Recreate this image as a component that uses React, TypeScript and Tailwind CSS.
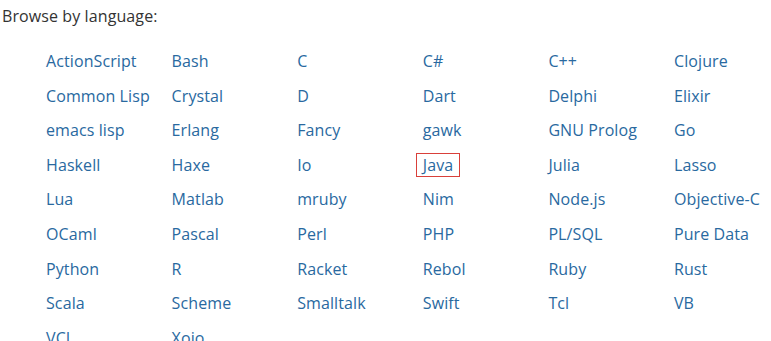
import React from "react";

const rows: string[][] = [
  ["ActionScript", "Bash", "C", "C#", "C++", "Clojure"],
  ["Common Lisp", "Crystal", "D", "Dart", "Delphi", "Elixir"],
  ["emacs lisp", "Erlang", "Fancy", "gawk", "GNU Prolog", "Go"],
  ["Haskell", "Haxe", "Io", "Java", "Julia", "Lasso"],
  ["Lua", "Matlab", "mruby", "Nim", "Node.js", "Objective-C"],
  ["OCaml", "Pascal", "Perl", "PHP", "PL/SQL", "Pure Data"],
  ["Python", "R", "Racket", "Rebol", "Ruby", "Rust"],
  ["Scala", "Scheme", "Smalltalk", "Swift", "Tcl", "VB"],
  ["VCL", "Xojo"],
];

export default function App() {
  return (
    <div
      className="w-[771px] h-[341px] overflow-hidden bg-white"
      style={{ fontFamily: '"Open Sans", "Liberation Sans", sans-serif' }}
    >
      <div className="pl-[2px] pt-[5px] h-[43.7px] text-[16px] leading-[22px] tracking-[0.1px] text-[#333333]">
        Browse by language:
      </div>
      <div className="pl-[46px] grid grid-cols-[repeat(6,125.6px)] auto-rows-[34.6px] w-[900px]">
        {rows.flat().map((name) => (
          <div key={name} className="flex items-center">
            {name === "Java" ? (
              <span className="-ml-[7px] px-[6px] border border-[#d9403a] text-[16px] leading-[22px] tracking-[0.1px] text-[#29699f]">
                {name}
              </span>
            ) : (
              <span className="text-[16px] leading-[22px] tracking-[0.1px] text-[#29699f]">{name}</span>
            )}
          </div>
        ))}
      </div>
    </div>
  );
}
